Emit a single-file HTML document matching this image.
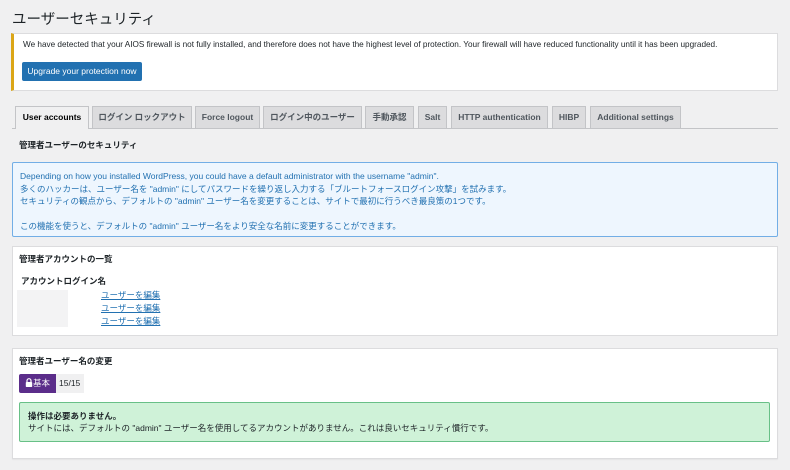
<!DOCTYPE html>
<html><head><meta charset="utf-8"><style>
*{box-sizing:border-box;margin:0;padding:0}
body{width:790px;height:470px;background:#f0f0f1;font-family:"Liberation Sans","Noto Sans CJK JP",sans-serif;color:#1d2327;position:relative;overflow:hidden;font-size:8.5px}
.a{position:absolute}
h1{position:absolute;left:12px;top:8px;font-size:14.5px;font-weight:400;color:#1d2327}
.notice{left:11px;top:33px;width:767px;height:58px;background:#fff;border:1px solid #dcdcde;border-left:3px solid #dba617}
.btn{left:22px;top:62px;width:120px;height:19px;background:#2271b1;border-radius:2px;color:#fff;font-size:8.5px;line-height:19px;text-align:center}
.tab{position:absolute;top:106px;height:22px;background:#dcdcde;border:1px solid #c3c4c7;border-bottom:none;font-weight:700;color:#50575e;font-size:8.5px;line-height:21px;text-align:center}
.tab.on{background:#f0f0f1;color:#000;height:23px}
.line{left:12px;top:128px;width:766px;height:1px;background:#c3c4c7}
.box{position:absolute;left:12px;width:766px;background:#fff;border:1px solid #dcdcde}
.info{left:12px;top:162px;width:766px;height:75px;background:#eef6fe;border:1px solid #72aee6;border-radius:2px;color:#2271b1;padding:7px 0 0 7px;line-height:12.5px}
a{color:#2271b1;text-decoration:underline}
b{font-weight:700}
</style></head><body>
<h1>ユーザーセキュリティ</h1>
<div class="a notice"></div>
<div class="a" style="left:23px;top:40px;font-size:8.2px">We have detected that your AIOS firewall is not fully installed, and therefore does not have the highest level of protection. Your firewall will have reduced functionality until it has been upgraded.</div>
<div class="a btn">Upgrade your protection now</div>
<div class="a line"></div>
<div class="tab on" style="left:15px;width:74px">User accounts</div>
<div class="tab" style="left:92px;width:100px">ログイン ロックアウト</div>
<div class="tab" style="left:195px;width:65px">Force logout</div>
<div class="tab" style="left:263px;width:99px">ログイン中のユーザー</div>
<div class="tab" style="left:365px;width:49px">手動承認</div>
<div class="tab" style="left:418px;width:29px">Salt</div>
<div class="tab" style="left:451px;width:97px">HTTP authentication</div>
<div class="tab" style="left:552px;width:34px">HIBP</div>
<div class="tab" style="left:590px;width:91px">Additional settings</div>
<div class="a" style="left:19px;top:139px;font-weight:700;font-size:8.5px">管理者ユーザーのセキュリティ</div>
<div class="a info">Depending on how you installed WordPress, you could have a default administrator with the username "admin".<br>多くのハッカーは、ユーザー名を "admin" にしてパスワードを繰り返し入力する「ブルートフォースログイン攻撃」を試みます。<br>セキュリティの観点から、デフォルトの "admin" ユーザー名を変更することは、サイトで最初に行うべき最良策の1つです。<br><br>この機能を使うと、デフォルトの "admin" ユーザー名をより安全な名前に変更することができます。</div>
<div class="box" style="top:246px;height:90px"></div>
<div class="a" style="left:19px;top:253px;font-weight:700">管理者アカウントの一覧</div>
<div class="a" style="left:21px;top:275px;font-weight:700">アカウントログイン名</div>
<div class="a" style="left:17px;top:290px;width:51px;height:37px;background:#f3f3f4"></div>
<div class="a" style="left:101px;top:289px;line-height:13px"><a>ユーザーを編集</a><br><a>ユーザーを編集</a><br><a>ユーザーを編集</a></div>
<div class="box" style="top:348px;height:111px;box-shadow:0 1px 1px rgba(0,0,0,.05)"></div>
<div class="a" style="left:19px;top:355px;font-weight:700">管理者ユーザー名の変更</div>
<div class="a" style="left:19px;top:374px;width:37px;height:19px;background:#5b2d8a;border-radius:2px 0 0 2px;color:#fff;line-height:19px;padding-left:6px">
<svg width="8" height="9" viewBox="0 0 8 9" style="vertical-align:-1px"><path d="M2 4V2.7a2 2 0 0 1 4 0V4" stroke="#fff" stroke-width="1.2" fill="none"/><rect x="0.8" y="4" width="6.4" height="5" rx="0.8" fill="#fff"/></svg>基本</div>
<div class="a" style="left:56px;top:374px;width:28px;height:19px;background:#f0f0f1;line-height:19px;padding-left:3px">15/15</div>
<div class="a" style="left:19px;top:402px;width:751px;height:40px;background:#cff2d8;border:1px solid #68c087;border-radius:2px;padding:7px 0 0 8px;line-height:12px;color:#1d2327"><b>操作は必要ありません。</b><br>サイトには、デフォルトの "admin" ユーザー名を使用してるアカウントがありません。これは良いセキュリティ慣行です。</div>
</body></html>
